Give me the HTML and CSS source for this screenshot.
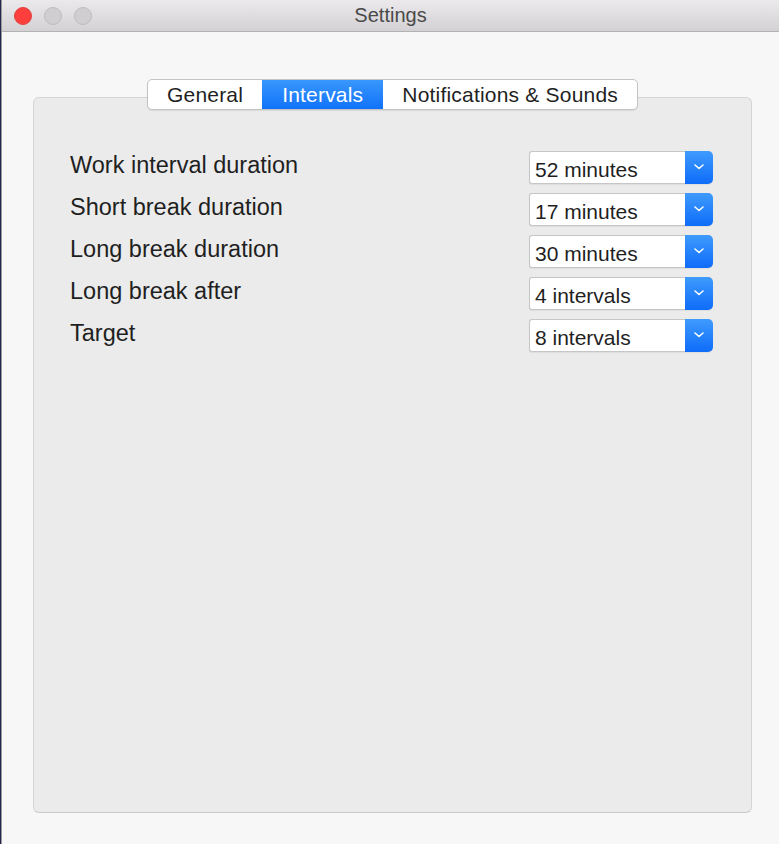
FILE: index.html
```html
<!DOCTYPE html>
<html lang="en">
<head>
  <meta charset="UTF-8">
  <meta name="viewport" content="width=device-width, initial-scale=1.0">
  <title>Settings</title>
  <link rel="stylesheet" href="styles.css">
</head>

<body>
  <div class="window">
    <div class="titlebar">
      <div class="lights">
        <span class="light close"></span>
        <span class="light"></span>
        <span class="light"></span>
      </div>
      <div class="title">Settings</div>
    </div>

    <div class="content">
      <div class="tabs">
        <div class="tab">General</div>
        <div class="tab active">Intervals</div>
        <div class="tab">Notifications &amp; Sounds</div>
      </div>

      <div class="group">
        <div class="row">
          <span class="label">Work interval duration</span>
          <div class="select"><span class="value">52 minutes</span><span class="arrow"><svg width="10" height="6" viewBox="0 0 10 6"><path d="M1 1l4 3.5L9 1" fill="none" stroke="#fff" stroke-width="1.6" stroke-linecap="round" stroke-linejoin="round"/></svg></span></div>
        </div>
        <div class="row">
          <span class="label">Short break duration</span>
          <div class="select"><span class="value">17 minutes</span><span class="arrow"><svg width="10" height="6" viewBox="0 0 10 6"><path d="M1 1l4 3.5L9 1" fill="none" stroke="#fff" stroke-width="1.6" stroke-linecap="round" stroke-linejoin="round"/></svg></span></div>
        </div>
        <div class="row">
          <span class="label">Long break duration</span>
          <div class="select"><span class="value">30 minutes</span><span class="arrow"><svg width="10" height="6" viewBox="0 0 10 6"><path d="M1 1l4 3.5L9 1" fill="none" stroke="#fff" stroke-width="1.6" stroke-linecap="round" stroke-linejoin="round"/></svg></span></div>
        </div>
        <div class="row">
          <span class="label">Long break after</span>
          <div class="select"><span class="value">4 intervals</span><span class="arrow"><svg width="10" height="6" viewBox="0 0 10 6"><path d="M1 1l4 3.5L9 1" fill="none" stroke="#fff" stroke-width="1.6" stroke-linecap="round" stroke-linejoin="round"/></svg></span></div>
        </div>
        <div class="row">
          <span class="label">Target</span>
          <div class="select"><span class="value">8 intervals</span><span class="arrow"><svg width="10" height="6" viewBox="0 0 10 6"><path d="M1 1l4 3.5L9 1" fill="none" stroke="#fff" stroke-width="1.6" stroke-linecap="round" stroke-linejoin="round"/></svg></span></div>
        </div>
      </div>
    </div>
  </div>
</body>
</html>
```

FILE: styles.css
```css
body {
  margin: 0;
  background-color: #23264e;
  font-family: "Liberation Sans", Arial, sans-serif;
  color: #1f1f1f;
}

.window {
  margin-left: 1px;
  height: 844px;
  background-color: #f7f7f7;
  border-left: 1px solid #9a9a9a;
  display: flex;
  flex-direction: column;
}

.titlebar {
  height: 31px;
  background: linear-gradient(#ebe9eb, #d3d1d3);
  border-bottom: 1px solid #b3b1b3;
  display: flex;
  align-items: center;
  position: relative;
}

.lights {
  display: flex;
  gap: 12px;
  padding-left: 12px;
}

.light {
  width: 18px;
  height: 18px;
  border-radius: 50%;
  background-color: #d0ced0;
  border: 1px solid #bebcbe;
  box-sizing: border-box;
}

.light.close {
  background-color: #fc3e3d;
  border-color: #e2403c;
}

.title {
  position: absolute;
  left: 0;
  right: 0;
  top: 0;
  line-height: 31px;
  text-align: center;
  font-size: 20px;
  color: #4a4a4a;
}

.content {
  padding: 47px 27px 0 31px;
  display: flex;
  flex-direction: column;
}

.tabs {
  align-self: center;
  display: flex;
  height: 31px;
  box-sizing: border-box;
  border: 1px solid #c3c3c3;
  border-radius: 5px;
  background-color: #fff;
  overflow: hidden;
  position: relative;
  z-index: 1;
  box-shadow: 0 1px 1px rgba(0, 0, 0, 0.08);
}

.tab {
  padding: 0 19px;
  font-size: 21px;
  letter-spacing: 0.2px;
  line-height: 29px;
  color: #1f1f1f;
}

.tab.active {
  background: linear-gradient(#3a97fd, #1072fa);
  color: #fff;
  padding: 0 20px;
}

.group {
  margin-top: -13px;
  height: 716px;
  box-sizing: border-box;
  background-color: #ebebeb;
  border: 1px solid #d4d4d4;
  border-bottom-color: #cbcbcb;
  border-radius: 6px;
  padding: 48px 38px 0 36px;
}

.row {
  height: 42px;
  display: flex;
  align-items: center;
  justify-content: space-between;
}

.label {
  font-size: 23.5px;
  padding-bottom: 3px;
}

.select {
  width: 184px;
  height: 33px;
  box-sizing: border-box;
  display: flex;
  background-color: #fff;
  border: 1px solid #c6c6c6;
  border-right: none;
  border-radius: 3px 5px 5px 3px;
  box-shadow: 0 1px 1px rgba(0, 0, 0, 0.06);
}

.value {
  flex: 1;
  font-size: 21px;
  line-height: 31px;
  padding: 2px 0 0 5px;
  color: #1f1f1f;
}

.arrow {
  width: 28px;
  margin: -1px 0;
  background: linear-gradient(#3f9bfd, #0e6cf9);
  border-radius: 0 5px 5px 0;
  display: flex;
  align-items: center;
  justify-content: center;
}
```
